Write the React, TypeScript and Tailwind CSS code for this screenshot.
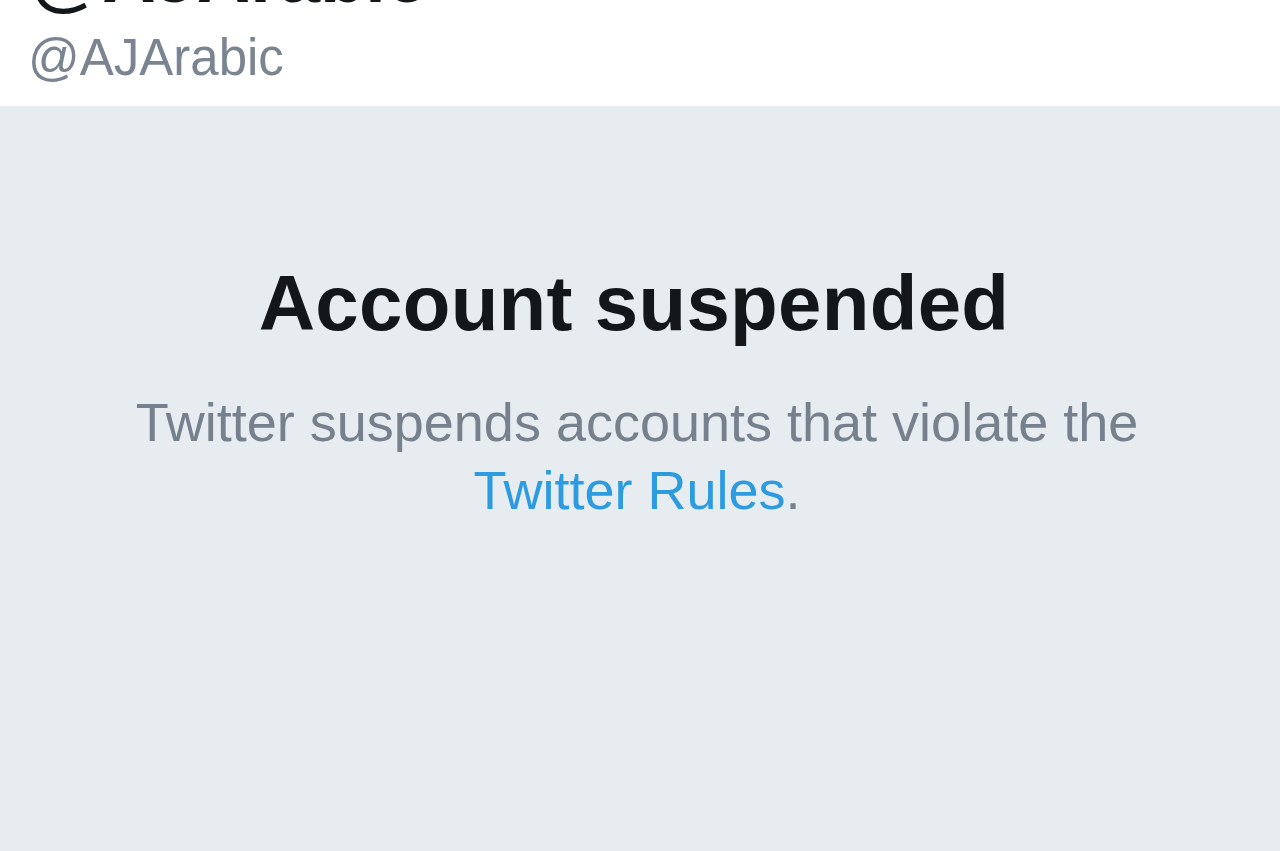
import React from "react";

export default function App() {
  return (
    <div
      className="flex min-h-screen w-full flex-col bg-[#e6ecf0]"
      style={{ fontFamily: '"Liberation Sans", Arial, sans-serif' }}
    >
      <header className="h-[106px] overflow-hidden bg-white pl-[30px]">
        <div className="-mt-[60px] text-[74px] font-bold leading-[74px] text-[#14171a]">
          @AJArabic
        </div>
        <div className="-ml-[2px] mt-[18px] text-[51px] leading-[51px] text-[#7a8591]">
          @AJArabic
        </div>
      </header>
      <main className="flex flex-1 flex-col items-center bg-[#e6ecf0] pt-[158px] text-center">
        <h1 className="-ml-[12px] text-[78px] font-bold leading-[78px] tracking-[0.3px] text-[#14171a]">
          Account suspended
        </h1>
        <p className="-ml-[6px] mt-[46px] max-w-[1150px] text-[54px] leading-[68px] text-[#76818d]">
          Twitter suspends accounts that violate the
          <br />
          <a className="text-[#2d9be0]">Twitter Rules</a>.
        </p>
      </main>
    </div>
  );
}
